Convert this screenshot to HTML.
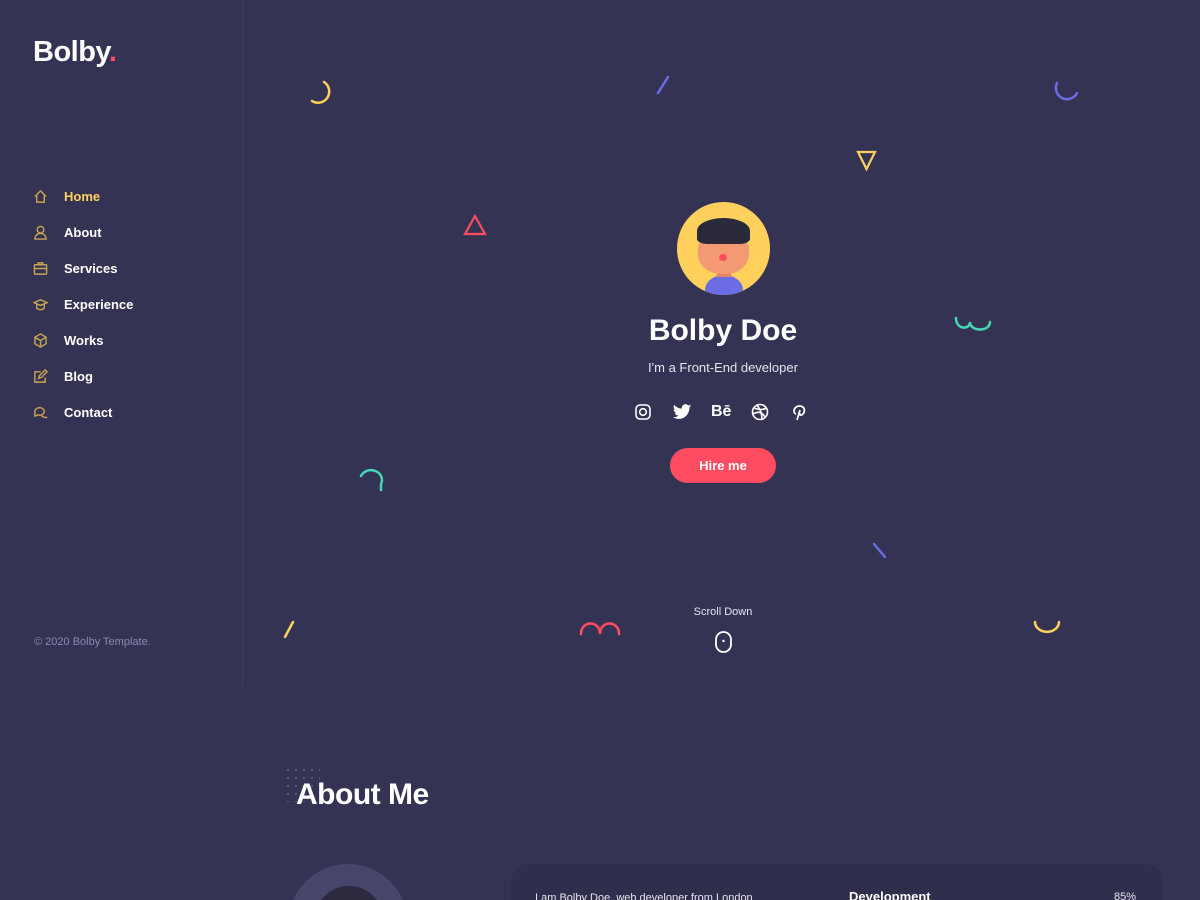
<!DOCTYPE html>
<html style="width:1200px;height:900px;overflow:hidden"><head><meta charset="utf-8"><style>
*{margin:0;padding:0;box-sizing:border-box}
body{width:1200px;height:900px;overflow:hidden;background:#353353;font-family:"Liberation Sans",sans-serif;color:#fff;position:relative}
.side{position:absolute;left:0;top:0;width:243px;height:686px;border-right:1px solid #3f3d5c}
.logo{position:absolute;left:33px;top:36px;font-size:29px;font-weight:bold;letter-spacing:-0.5px}
.logo span{color:#ff4c60}
.nav{position:absolute;left:33px;top:189px}
.nav div{height:36px;display:flex;align-items:flex-start;font-size:13px;font-weight:bold}
.nav svg{width:15px;height:15px;margin-right:16px;margin-top:0px}
.copy{position:absolute;left:34px;top:636px;font-size:11px;color:#8b88b1}
.ab{position:absolute;font-weight:bold}
</style></head><body>
<div class="side">
<div class="logo">Bolby<span>.</span></div>
<div class="nav">
<div style="color:#ffd15c"><svg viewBox="0 0 16 16" fill="none" stroke="#c9a54f" stroke-width="1.5"><path d="M2 8L8 2l6 6M4 7v7h8V7"/></svg>Home</div>
<div><svg viewBox="0 0 16 16" fill="none" stroke="#c9a54f" stroke-width="1.5"><circle cx="8" cy="5" r="3.5"/><path d="M2 15c0-4 3-6 6-6s6 2 6 6z"/></svg>About</div>
<div><svg viewBox="0 0 16 16" fill="none" stroke="#c9a54f" stroke-width="1.5"><rect x="1.5" y="4" width="13" height="10" rx="1"/><path d="M5.5 4V2h5v2M1.5 8h13"/></svg>Services</div>
<div><svg viewBox="0 0 16 16" fill="none" stroke="#c9a54f" stroke-width="1.5"><path d="M1 6l7-3 7 3-7 3z M4 8v4c2 2 6 2 8 0V8"/></svg>Experience</div>
<div><svg viewBox="0 0 16 16" fill="none" stroke="#c9a54f" stroke-width="1.5"><path d="M8 1l6 3.5v7L8 15l-6-3.5v-7z M2 4.5L8 8l6-3.5M8 8v7"/></svg>Works</div>
<div><svg viewBox="0 0 16 16" fill="none" stroke="#c9a54f" stroke-width="1.5"><path d="M13 9v5H2V3h6M6 10l1-3 6-6 2 2-6 6z"/></svg>Blog</div>
<div><svg viewBox="0 0 16 16" fill="none" stroke="#c9a54f" stroke-width="1.5"><path d="M2 7a5 4 0 1 1 3 3.5L2 12z M9 11a4 3 0 0 0 5 2l1 1"/></svg>Contact</div>
</div>
<div class="copy">© 2020 Bolby Template.</div>
</div>

<svg style="position:absolute;left:0;top:0" width="1200" height="900" fill="none" stroke-width="2.5" stroke-linecap="round">
<path d="M324 82a9 9 0 0 1-12 19" stroke="#ffd15c"/>
<path d="M668 77l-10 16" stroke="#6c6ce5"/>
<path d="M1057 83a9 9 0 0 0 20 10" stroke="#6c6ce5"/>
<path d="M858 152h17l-8.5 17z" stroke="#ffd15c" stroke-width="2.2"/>
<path d="M475 216l10 18h-20z" stroke="#ff4c60" stroke-width="2.2"/>
<path d="M956 318c0 12 14 12 14 4c0 10 20 10 20 0" stroke="#44d7b6"/>
<path d="M361 476a10 9 0 0 1 20 8v6" stroke="#44d7b6"/>
<path d="M874 544l11 13" stroke="#6c6ce5"/>
<path d="M293 622l-8 15" stroke="#ffd15c"/>
<path d="M581 634c0-14 19-14 19 0c0-14 19-14 19 0" stroke="#ff4c60"/>
<path d="M1035 622a11 9 0 0 0 24 0" stroke="#ffd15c"/>
<rect x="716" y="632" width="15" height="20" rx="7.5" stroke="#fff" stroke-width="1.8"/>
<circle cx="723.5" cy="641" r="1.2" fill="#fff" stroke="none"/>
</svg>

<div style="position:absolute;left:677px;top:202px;width:93px;height:93px;border-radius:50%;background:#ffd15c;overflow:hidden">
<div style="position:absolute;left:28px;top:73px;width:38px;height:30px;border-radius:50%;background:#6c6ce5"></div>
<div style="position:absolute;left:40px;top:60px;width:14px;height:15px;background:#e8846a"></div>
<div style="position:absolute;left:21px;top:28px;width:51px;height:44px;border-radius:45%;background:#f39a74"></div>
<div style="position:absolute;left:20px;top:16px;width:53px;height:26px;border-radius:50% 50% 20% 20%;background:#2b2a3a"></div>
<div style="position:absolute;left:42px;top:52px;width:8px;height:7px;border-radius:50%;background:#ff4c60"></div>
</div>
<div class="ab" style="left:0;width:1446px;text-align:center;top:314px;font-size:30px">Bolby Doe</div>
<div style="position:absolute;left:0;width:1446px;text-align:center;top:360px;font-size:13px;color:#e5e5f0">I'm a Front-End developer</div>
<div style="position:absolute;left:633px;top:402px;display:flex;gap:0;font-size:16px;font-weight:bold">
<svg width="20" height="20" viewBox="0 0 20 20" fill="none" stroke="#fff" stroke-width="1.6"><rect x="3" y="3" width="14" height="14" rx="4"/><circle cx="10" cy="10" r="3.3"/></svg>
<svg style="margin-left:19px" width="20" height="20" viewBox="0 0 24 24" fill="#fff"><path d="M23 5a9 9 0 0 1-2.6.7A4.5 4.5 0 0 0 22.4 3a9 9 0 0 1-2.9 1.1A4.5 4.5 0 0 0 11.8 8 12.8 12.8 0 0 1 2.5 3.3a4.5 4.5 0 0 0 1.4 6A4.5 4.5 0 0 1 1.9 8.7a4.5 4.5 0 0 0 3.6 4.4 4.5 4.5 0 0 1-2 .1 4.5 4.5 0 0 0 4.2 3.1A9 9 0 0 1 1 18.2 12.8 12.8 0 0 0 8 20.3c8.3 0 12.8-6.9 12.8-12.8v-.6A9 9 0 0 0 23 5z"/></svg>
<span style="margin-left:19px;line-height:20px">Bē</span>
<svg style="margin-left:19px" width="20" height="20" viewBox="0 0 20 20" fill="none" stroke="#fff" stroke-width="1.6"><circle cx="10" cy="10" r="7.5"/><path d="M4 6c5 2 9 2 12.5 0M3 12c5-3 9-2 12 3M7 3c3 4 5 9 5 14"/></svg>
<svg style="margin-left:19px" width="20" height="20" viewBox="0 0 20 20" fill="none" stroke="#fff" stroke-width="1.8"><path d="M8 18l3-10M7 12c-3-1-3-7 3-8 5 0 7 4 4 8-2 2-4 1-3-1"/></svg>
</div>
<div class="ab" style="left:670px;top:448px;width:106px;height:35px;border-radius:18px;background:#ff4c60;font-size:13px;text-align:center;line-height:35px">Hire me</div>
<div style="position:absolute;left:0;width:1446px;text-align:center;top:606px;font-size:11px;color:#e5e5f0">Scroll Down</div>

<div style="position:absolute;left:284px;top:766px;width:36px;height:36px;background-image:radial-gradient(#55537a 1.2px,transparent 1.3px);background-size:8px 8px"></div>
<div class="ab" style="left:296px;top:778px;font-size:30px;letter-spacing:-0.5px">About Me</div>
<div style="position:absolute;left:288px;top:864px;width:120px;height:36px;overflow:hidden"><div style="width:120px;height:120px;border-radius:50%;background:#47456a;position:relative"><div style="position:absolute;left:26px;top:22px;width:70px;height:70px;border-radius:50%;background:#2b2a3f"></div></div></div>
<div style="position:absolute;left:511px;top:864px;width:652px;height:36px;border-radius:18px 18px 0 0;background:#302e4d"></div>
<div style="position:absolute;left:535px;top:892px;font-size:11px;color:#e5e5f0;height:8px;overflow:hidden">I am Bolby Doe, web developer from London</div>
<div class="ab" style="left:849px;top:889px;font-size:13px;height:11px;overflow:hidden">Development</div>
<div style="position:absolute;left:1114px;top:891px;font-size:11px;color:#e5e5f0;height:9px;overflow:hidden">85%</div>
</body></html>
